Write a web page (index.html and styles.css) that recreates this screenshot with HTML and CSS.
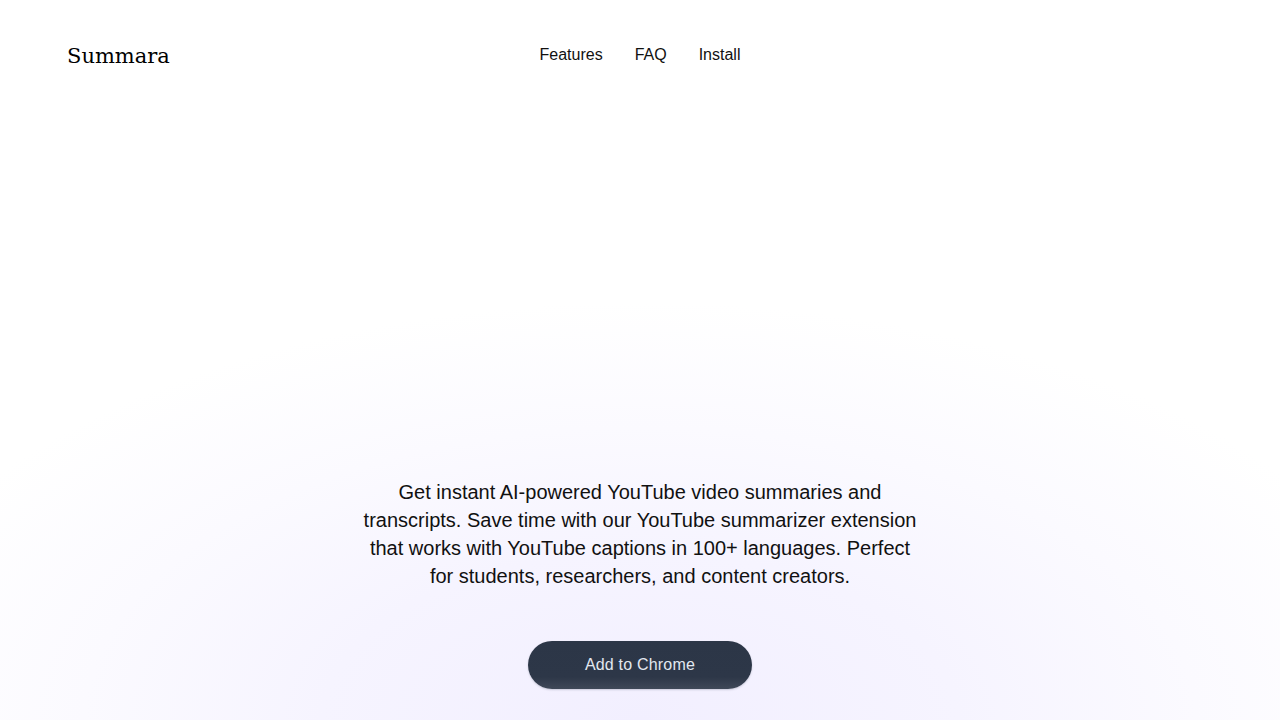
FILE: index.html
```html
<!DOCTYPE html>
<html>
<head>
	<title>Summara - YouTube Summarizer</title>
	<link rel="stylesheet" href="styles.css">
</head>
<body>
	<header class="site-header">
		<a class="logo" href="#">Summara</a>
		<nav class="nav">
			<a href="#features">Features</a>
			<a href="#faq">FAQ</a>
			<a href="#install">Install</a>
		</nav>
		<div></div>
	</header>

	<main class="hero">
		<p class="hero-text">Get instant AI-powered YouTube video summaries and transcripts. Save time with our YouTube summarizer extension that works with YouTube captions in 100+ languages. Perfect for students, researchers, and content creators.</p>
		<a class="cta" href="#install">Add to Chrome</a>
	</main>
</body>
</html>
```
FILE: styles.css
```css
html, body {
	margin: 0;
	height: 100%;
}
body {
	font-family: "Liberation Sans", Arial, sans-serif;
	color: #111;
	background: #fff radial-gradient(ellipse 62% 58% at 50% 100%, #f2efff 0%, #f6f4ff 40%, #fbfaff 70%, #ffffff 100%) no-repeat;
	overflow: hidden;
}
a {
	color: inherit;
	text-decoration: none;
}
.site-header {
	display: grid;
	grid-template-columns: 1fr auto 1fr;
	align-items: center;
	padding: 44px 67px 0;
}
.logo {
	font-family: "DejaVu Serif", Georgia, serif;
	font-size: 21px;
	color: #000;
}
.nav {
	display: flex;
	gap: 32px;
	font-size: 16px;
	margin-top: -3px;
}
.hero {
	display: flex;
	flex-direction: column;
	align-items: center;
	padding-top: 410px;
}
.hero-text {
	max-width: 560px;
	margin: 0;
	text-align: center;
	font-size: 20px;
	line-height: 28px;
	color: #111;
}
.cta {
	margin-top: 51px;
	width: 224px;
	height: 48px;
	display: flex;
	align-items: center;
	justify-content: center;
	border-radius: 24px;
	background: linear-gradient(#2c3647 0%, #2d3748 75%, #3f4858 100%);
	color: #e2e8f0;
	font-size: 16px;
	letter-spacing: 0.2px;
	box-shadow: 0 1px 2px rgba(30, 40, 60, 0.2);
}
```
